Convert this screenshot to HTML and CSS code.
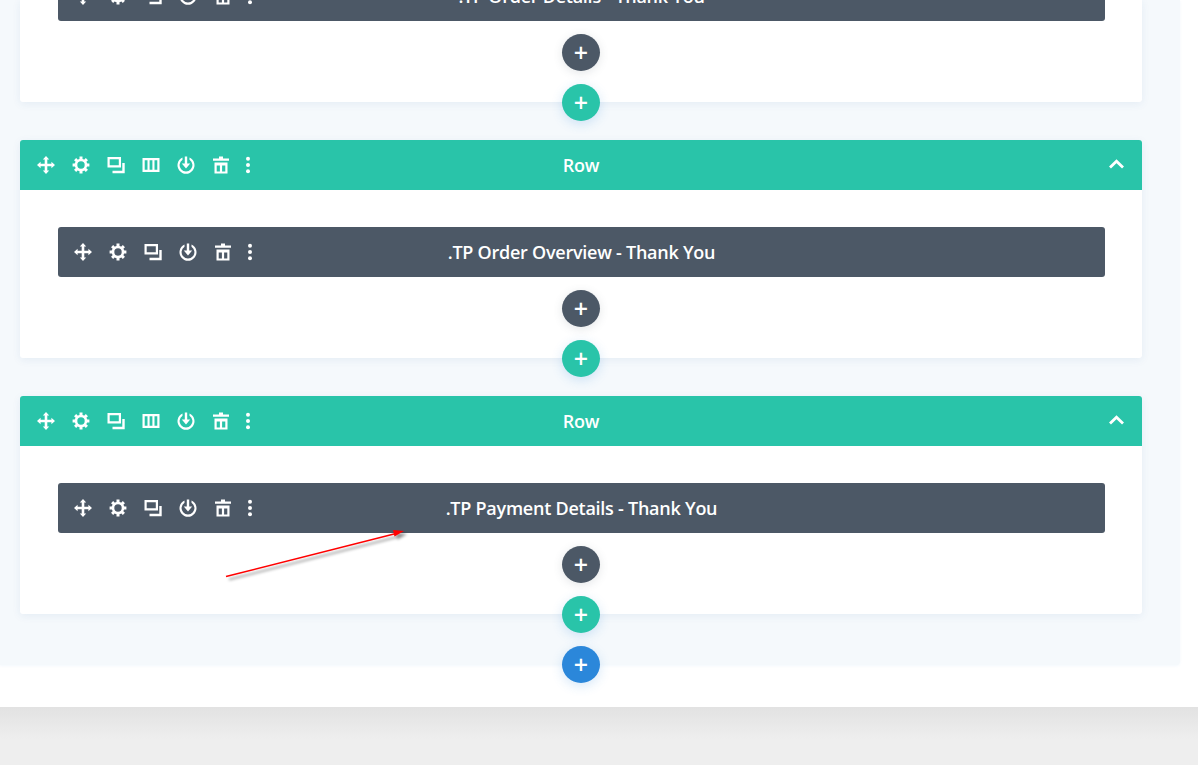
FILE: index.html
```html
<!DOCTYPE html>
<html lang="en">
<head>
    <meta charset="UTF-8">
    <meta name="viewport" content="width=device-width, initial-scale=1.0">
    <title>Builder - Thank You</title>
    <link rel="stylesheet" href="styles.css">
</head>
<body>
    <svg class="icon-defs" width="0" height="0" aria-hidden="true">
        <symbol id="i-move" viewBox="0 0 18 18">
            <path fill="currentColor" d="M9 0 12.200 3.600H10.300V7.700H14.400V5.800L18 9 14.400 12.200V10.300H10.300V14.400H12.200L9 18 5.800 14.400H7.700V10.300H3.600V12.200L0 9 3.600 5.800V7.700H7.700V3.600H5.800Z"/>
        </symbol>
        <symbol id="i-gear" viewBox="0 0 18 18">
            <circle cx="9" cy="9" r="5" fill="none" stroke="currentColor" stroke-width="2.600"/>
            <g stroke="currentColor" stroke-width="3">
                <path d="M9 .6V4M9 14v3.400M.6 9H4M14 9h3.400"/>
                <path d="M3.100 3.100 5.500 5.500M12.500 12.500l2.400 2.400M3.100 14.900l2.400-2.400M12.500 5.500l2.400-2.400"/>
            </g>
        </symbol>
        <symbol id="i-clone" viewBox="0 0 18 18">
            <path fill="currentColor" fill-rule="evenodd" d="M.5 1h13.500v10.500H.5ZM2.700 3.200v6.100h9.100V3.200Z"/>
            <path fill="currentColor" d="M15.300 7h2.400v10.200H5.500v-2.400h9.800Z"/>
        </symbol>
        <symbol id="i-columns" viewBox="0 0 18 18">
            <path fill="currentColor" fill-rule="evenodd" d="M.5 2h17v14H.5ZM2.700 4.200v9.600h2.800V4.200Zm4.900 0v9.600h2.800V4.200Zm4.900 0v9.600h2.800V4.200Z"/>
        </symbol>
        <symbol id="i-save" viewBox="0 0 18 18">
            <path fill="currentColor" d="M5.500 1.500v2.300a6.400 6.400 0 1 0 7 0V1.500a8.500 8.500 0 1 1-7 0Z"/>
            <path fill="currentColor" d="M7.800 .5h2.400v7h3L9 12.500 4.800 7.500h3Z"/>
        </symbol>
        <symbol id="i-trash" viewBox="0 0 18 18">
            <path fill="currentColor" fill-rule="evenodd" d="M7 .5h4v2h6v2.200H1V2.500h6ZM2.500 6.500h13V17.500h-13ZM4.700 9.500v6h3.200v-6Zm5.400 0v6h3.200v-6Z"/>
        </symbol>
        <symbol id="i-more" viewBox="0 0 18 18">
            <circle fill="currentColor" cx="9" cy="2.800" r="2"/>
            <circle fill="currentColor" cx="9" cy="9" r="2"/>
            <circle fill="currentColor" cx="9" cy="15.200" r="2"/>
        </symbol>
    </svg>

    <main class="page">
        <section class="section">
            <div class="row row-first">
                <div class="row-body">
                    <div class="module">
                        <div class="tools">
                            <svg class="tool"><use href="#i-move"/></svg>
                            <svg class="tool"><use href="#i-gear"/></svg>
                            <svg class="tool"><use href="#i-clone"/></svg>
                            <svg class="tool"><use href="#i-save"/></svg>
                            <svg class="tool"><use href="#i-trash"/></svg>
                            <svg class="tool tool-more"><use href="#i-more"/></svg>
                        </div>
                        <span class="title">.TP Order Details - Thank You</span>
                    </div>
                    <button class="add add-dark">+</button>
                </div>
                <button class="add add-green add-edge">+</button>
            </div>

            <div class="row">
                <div class="row-head">
                    <div class="tools">
                        <svg class="tool"><use href="#i-move"/></svg>
                        <svg class="tool"><use href="#i-gear"/></svg>
                        <svg class="tool"><use href="#i-clone"/></svg>
                        <svg class="tool"><use href="#i-columns"/></svg>
                        <svg class="tool"><use href="#i-save"/></svg>
                        <svg class="tool"><use href="#i-trash"/></svg>
                        <svg class="tool tool-more"><use href="#i-more"/></svg>
                    </div>
                    <span class="title">Row</span>
                    <svg class="chevron" viewBox="0 0 15 10"><path d="M1 8.500 7.500 2.200 14 8.500" fill="none" stroke="currentColor" stroke-width="2.800"/></svg>
                </div>
                <div class="row-body">
                    <div class="module">
                        <div class="tools">
                            <svg class="tool"><use href="#i-move"/></svg>
                            <svg class="tool"><use href="#i-gear"/></svg>
                            <svg class="tool"><use href="#i-clone"/></svg>
                            <svg class="tool"><use href="#i-save"/></svg>
                            <svg class="tool"><use href="#i-trash"/></svg>
                            <svg class="tool tool-more"><use href="#i-more"/></svg>
                        </div>
                        <span class="title">.TP Order Overview - Thank You</span>
                    </div>
                    <button class="add add-dark">+</button>
                </div>
                <button class="add add-green add-edge">+</button>
            </div>

            <div class="row">
                <div class="row-head">
                    <div class="tools">
                        <svg class="tool"><use href="#i-move"/></svg>
                        <svg class="tool"><use href="#i-gear"/></svg>
                        <svg class="tool"><use href="#i-clone"/></svg>
                        <svg class="tool"><use href="#i-columns"/></svg>
                        <svg class="tool"><use href="#i-save"/></svg>
                        <svg class="tool"><use href="#i-trash"/></svg>
                        <svg class="tool tool-more"><use href="#i-more"/></svg>
                    </div>
                    <span class="title">Row</span>
                    <svg class="chevron" viewBox="0 0 15 10"><path d="M1 8.500 7.500 2.200 14 8.500" fill="none" stroke="currentColor" stroke-width="2.800"/></svg>
                </div>
                <div class="row-body">
                    <div class="module">
                        <div class="tools">
                            <svg class="tool"><use href="#i-move"/></svg>
                            <svg class="tool"><use href="#i-gear"/></svg>
                            <svg class="tool"><use href="#i-clone"/></svg>
                            <svg class="tool"><use href="#i-save"/></svg>
                            <svg class="tool"><use href="#i-trash"/></svg>
                            <svg class="tool tool-more"><use href="#i-more"/></svg>
                        </div>
                        <span class="title">.TP Payment Details - Thank You</span>
                    </div>
                    <button class="add add-dark">+</button>
                </div>
                <button class="add add-green add-edge">+</button>
            </div>

            <button class="add add-blue add-section">+</button>
        </section>
        <div class="below"></div>
    </main>

    <div class="footer-band"></div>

    <!-- annotation drawn over the screenshot -->
    <svg class="arrow" viewBox="0 0 200 70" width="200" height="70">
        <path d="M6 56.500 176 13.500" stroke="#f00" stroke-width="1.500" fill="none"/>
        <path d="M173 10 184 11 174.500 16.500Z" fill="#f00"/>
    </svg>
</body>
</html>
```

FILE: styles.css
```css
* {
    margin: 0;
    padding: 0;
    box-sizing: border-box;
}

body {
    position: relative;
    height: 765px;
    overflow: hidden;
    background: #fff;
    font-family: "Open Sans", sans-serif;
    color: #fff;
}

.icon-defs {
    position: absolute;
}

.page {
    height: 707px;
    background: #fff;
    position: relative;
    z-index: 1;
}

.section {
    position: relative;
    width: 1180px;
    height: 665px;
    padding: 0 38px 0 20px;
    display: flex;
    flex-direction: column;
    gap: 38px;
    background: #f5f9fc;
    border-radius: 0 0 4px 0;
    box-shadow: 0 1px 3px rgba(43, 135, 218, 0.06);
}

.row {
    position: relative;
    background: #fff;
    border-radius: 3px;
    box-shadow: 0 2px 8px rgba(43, 87, 151, 0.08);
    height: 218px;
}

.row-first {
    height: 102px;
    border-radius: 0 0 3px 3px;
}

.row-first .module {
    margin-top: -29px;
}

.row-first .row-body {
    padding-top: 0;
}

.row-head {
    position: relative;
    height: 50px;
    display: flex;
    align-items: center;
    padding-left: 17px;
    background: #29c4a9;
    border-radius: 3px 3px 0 0;
}

.row-body {
    padding: 37px 37px 0 38px;
    display: flex;
    flex-direction: column;
    align-items: center;
}

.module {
    position: relative;
    width: 100%;
    height: 50px;
    display: flex;
    align-items: center;
    padding-left: 16px;
    background: #4c5866;
    border-radius: 3px;
}

.tools {
    display: flex;
    align-items: center;
    gap: 17px;
}

.tool {
    display: block;
    width: 18px;
    height: 18px;
    color: #fff;
}

.tool-more {
    margin-left: -8px;
}

.title {
    position: absolute;
    left: 0;
    right: 0;
    text-align: center;
    font-size: 18px;
    font-weight: 600;
    line-height: 50px;
    letter-spacing: -0.25px;
}

.chevron {
    position: absolute;
    right: 18px;
    top: 19px;
    width: 15px;
    height: 10px;
    color: #fff;
}

.add {
    display: block;
    width: 38px;
    height: 37px;
    border: none;
    border-radius: 50%;
    color: #fff;
    font-family: "Open Sans", sans-serif;
    font-size: 25px;
    font-weight: 600;
    line-height: 35px;
    text-align: center;
}

.add-dark {
    margin-top: 13px;
    margin-left: -1px;
    background: #4c5866;
    box-shadow: 0 2px 10px rgba(76, 88, 102, 0.15);
}

.add-green {
    background: #29c4a9;
    box-shadow: 0 3px 12px rgba(43, 135, 218, 0.2);
}

.add-blue {
    background: #2b87da;
    box-shadow: 0 3px 12px rgba(43, 135, 218, 0.2);
}

.add-edge {
    position: absolute;
    left: 542px;
    bottom: -19px;
}

.add-section {
    position: absolute;
    left: 562px;
    bottom: -18px;
}

.footer-band {
    height: 58px;
    background: linear-gradient(#e2e2e2, #eeeeee 55%);
}

.arrow {
    position: absolute;
    left: 220px;
    top: 520px;
    z-index: 2;
    filter: drop-shadow(3px 3px 1.5px rgba(0, 0, 0, 0.45));
}
```
